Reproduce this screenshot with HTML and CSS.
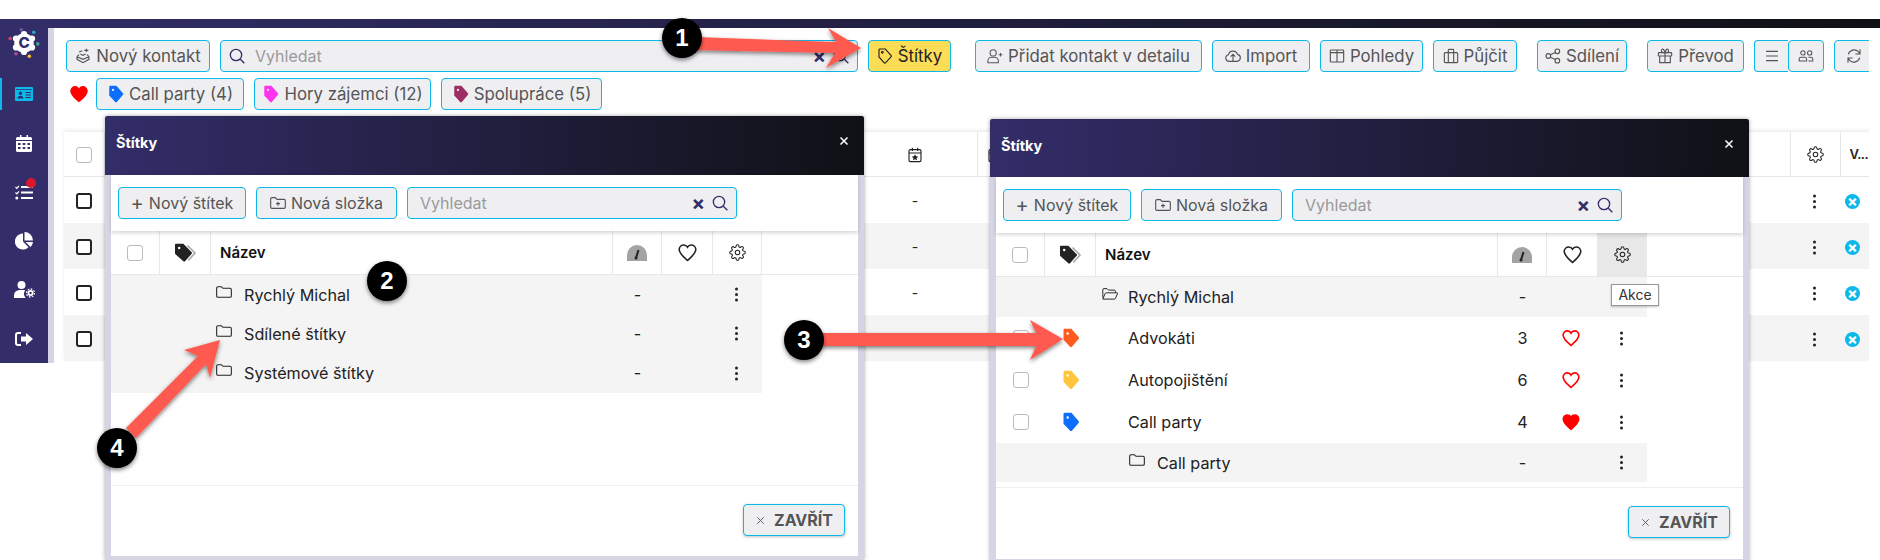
FILE: index.html
```html
<!DOCTYPE html>
<html lang="cs">
<head>
    <meta charset="UTF-8">
    <meta name="viewport" content="width=device-width, initial-scale=1.0">
    <title>Štítky</title>
    <link rel="stylesheet" href="styles.css">
</head>
<body>
    <!-- icon set, used through <use> below -->
    <svg class="icon-defs" xmlns="http://www.w3.org/2000/svg">
        <symbol id="i-search" viewBox="0 0 24 24"><circle cx="10.5" cy="10.5" r="8.5"/><path d="M17 17l6 6"/></symbol>
        <symbol id="i-tag" viewBox="0 0 24 24"><path d="M4 1.5h8.5l8.8 9.8a1.2 1.2 0 0 1 0 1.6l-8.6 9.4a1.2 1.2 0 0 1-1.8 0L3 13.5V2.5a1 1 0 0 1 1-1z"/><circle cx="8" cy="6.5" r="1.3"/></symbol>
        <symbol id="i-tag-fill" viewBox="0 0 24 24"><path fill-rule="evenodd" d="M4.5 1h8l8.8 10a1.5 1.5 0 0 1 0 2l-8.2 9.6a1.5 1.5 0 0 1-2.2 0L3 14V2.5A1.5 1.5 0 0 1 4.5 1zM8 5a1.5 1.5 0 1 0 0 3 1.5 1.5 0 0 0 0-3z"/></symbol>
        <symbol id="i-heart" viewBox="0 0 24 24"><path d="M12 22C8 18.5 1.5 13.5 1.5 8A5.8 5.8 0 0 1 7.3 2.5c2 0 3.7 1 4.7 2.8 1-1.8 2.7-2.8 4.7-2.8A5.8 5.8 0 0 1 22.5 8c0 5.5-6.5 10.5-10.5 14z"/></symbol>
        <symbol id="i-gear" viewBox="0 0 24 24"><circle cx="12" cy="12" r="3.2"/><path d="M19.4 15a1.65 1.65 0 0 0 .33 1.82l.06.06a2 2 0 0 1 0 2.83 2 2 0 0 1-2.83 0l-.06-.06a1.65 1.65 0 0 0-1.82-.33 1.65 1.65 0 0 0-1 1.51V21a2 2 0 0 1-2 2 2 2 0 0 1-2-2v-.09A1.65 1.65 0 0 0 9 19.4a1.65 1.65 0 0 0-1.82.33l-.06.06a2 2 0 0 1-2.83 0 2 2 0 0 1 0-2.83l.06-.06a1.65 1.65 0 0 0 .33-1.82 1.65 1.65 0 0 0-1.51-1H3a2 2 0 0 1-2-2 2 2 0 0 1 2-2h.09A1.65 1.65 0 0 0 4.6 9a1.65 1.65 0 0 0-.33-1.82l-.06-.06a2 2 0 0 1 0-2.83 2 2 0 0 1 2.83 0l.06.06a1.65 1.65 0 0 0 1.82.33H9a1.65 1.65 0 0 0 1-1.51V3a2 2 0 0 1 2-2 2 2 0 0 1 2 2v.09a1.65 1.65 0 0 0 1 1.51 1.65 1.65 0 0 0 1.82-.33l.06-.06a2 2 0 0 1 2.83 0 2 2 0 0 1 0 2.83l-.06.06a1.65 1.65 0 0 0-.33 1.82V9a1.65 1.65 0 0 0 1.51 1H21a2 2 0 0 1 2 2 2 2 0 0 1-2 2h-.09a1.65 1.65 0 0 0-1.51 1z"/></symbol>
        <symbol id="i-folder" viewBox="0 0 24 18"><path d="M1 3A2 2 0 0 1 3 1h5l2.5 2.5H21a2 2 0 0 1 2 2V15a2 2 0 0 1-2 2H3a2 2 0 0 1-2-2z"/></symbol>
        <symbol id="i-folder-open" viewBox="0 0 28 20"><path d="M2 16V3a2 2 0 0 1 2-2h5l2.5 2.5H21a2 2 0 0 1 2 2V8M2 18.5L6 9a1.5 1.5 0 0 1 1.4-1H25.5a1 1 0 0 1 1 1.4L23 17.5a1.5 1.5 0 0 1-1.4 1z"/></symbol>
        <symbol id="i-folder-plus" viewBox="0 0 24 20"><path d="M1 4A2 2 0 0 1 3 2h5l2.5 2.5H21a2 2 0 0 1 2 2V16a2 2 0 0 1-2 2H3a2 2 0 0 1-2-2zM12 8v6M9 11h6"/></symbol>
        <symbol id="i-box" viewBox="0 0 24 24"><path d="M3 13l9 4 9-4M3 13l3-3M21 13l-3-3M3 13v4l9 5 9-5v-4M8 9l4 2 4-2M14 3.5h6M17 1v5M6 6l5-2"/></symbol>
        <symbol id="i-user-plus" viewBox="0 0 26 24"><circle cx="10" cy="7" r="5"/><path d="M1.5 23v-3a6 6 0 0 1 6-6h5a6 6 0 0 1 6 6v3zM22 7v6M19 10h6"/></symbol>
        <symbol id="i-cloud" viewBox="0 0 24 24"><path d="M6 20a5 5 0 0 1-.8-9.9A7 7 0 0 1 18.7 9.5 5.3 5.3 0 0 1 18 20zM12 19v-9M8.5 13l3.5-3.5 3.5 3.5"/></symbol>
        <symbol id="i-columns" viewBox="0 0 24 24"><rect x="2" y="3" width="20" height="18" rx="1"/><path d="M12 3v18M2 7h20"/></symbol>
        <symbol id="i-case" viewBox="0 0 24 24"><rect x="2" y="7" width="20" height="15" rx="1.5"/><path d="M8 7V3a1 1 0 0 1 1-1h6a1 1 0 0 1 1 1v4M8 7v15M16 7v15"/></symbol>
        <symbol id="i-share" viewBox="0 0 24 24"><circle cx="18.5" cy="5" r="3.5"/><circle cx="5" cy="12" r="3.5"/><circle cx="18.5" cy="19" r="3.5"/><path d="M8.1 10.3l7.3-3.7M8.1 13.7l7.3 3.7"/></symbol>
        <symbol id="i-gift" viewBox="0 0 24 24"><rect x="2" y="7" width="20" height="5" rx="1"/><path d="M4 12v10h16V12M12 7v15M12 7C9 7 6.5 6 6.5 4S9 1 10 2.5 12 7 12 7zM12 7c3 0 5.5-1 5.5-3S15 1 14 2.5 12 7 12 7z"/></symbol>
        <symbol id="i-menu" viewBox="0 0 24 24"><path d="M3 5h18M3 12h18M3 19h18"/></symbol>
        <symbol id="i-users" viewBox="0 0 26 24"><circle cx="8" cy="7" r="3.5"/><circle cx="19" cy="7" r="3.5"/><path d="M2 20v-3a3 3 0 0 1 3-3h6a3 3 0 0 1 3 3v3zM17 14h4a3 3 0 0 1 3 3v3h-7"/></symbol>
        <symbol id="i-refresh" viewBox="0 0 24 24"><path d="M21 2v7h-7M3 22v-7h7M3.5 9.5A9 9 0 0 1 18.5 5.5L21 9M20.5 14.5A9 9 0 0 1 5.5 18.5L3 15"/></symbol>
        <symbol id="i-close" viewBox="0 0 24 24"><path d="M5 5l14 14M19 5L5 19"/></symbol>
        <symbol id="i-calendar-star" viewBox="0 0 24 24"><rect x="3" y="4" width="18" height="18" rx="2"/><path d="M3 9h18M8 1v5M16 1v5"/><path class="icon-solid" d="M12 11l1.5 3 3.3.4-2.4 2.3.6 3.3-3-1.6-3 1.6.6-3.3-2.4-2.3 3.3-.4z"/></symbol>
    </svg>

    <div class="topbar"></div>
    <div class="page">
        <nav class="sidebar">
            <div class="logo">
                <svg width="32" height="32" viewBox="0 0 36 36">
                    <g fill="#fff">
                        <circle cx="18" cy="18" r="11"/><circle cx="18" cy="8" r="3.5"/><circle cx="27" cy="13" r="3.5"/>
                        <circle cx="27" cy="23" r="3.5"/><circle cx="18" cy="28" r="3.5"/><circle cx="9" cy="23" r="3.5"/><circle cx="9" cy="13" r="3.5"/>
                    </g>
                    <circle cx="15" cy="3" r="2" fill="#6a5a9c"/><circle cx="29" cy="6" r="2" fill="#2aa6c9"/><circle cx="33.5" cy="19" r="2" fill="#3aa98a"/>
                    <circle cx="24" cy="33" r="2" fill="#f4c430"/><circle cx="9" cy="30" r="2" fill="#b84a8e"/><circle cx="2.5" cy="13" r="2" fill="#d8455a"/>
                    <text class="logo-letter" x="18" y="24" text-anchor="middle">C</text>
                </svg>
            </div>
            <a class="nav-item active">
                <svg width="18" height="14" viewBox="0 0 18 14"><path fill="#0bb8ea" fill-rule="evenodd" d="M1 0h16a1 1 0 0 1 1 1v12a1 1 0 0 1-1 1H1a1 1 0 0 1-1-1V1a1 1 0 0 1 1-1zm0 2v.8h16V2zm4.5 2.5a1.7 1.7 0 1 0 0 3.4 1.7 1.7 0 0 0 0-3.4zM2.5 11.5h6c0-1.6-1.3-2.8-3-2.8s-3 1.2-3 2.8zM10.5 5v1H16V5zm0 2.500v1H16v-1zm0 2.500v1H16v-1z"/></svg>
            </a>
            <a class="nav-item">
                <svg width="16" height="17" viewBox="0 0 16 17"><path fill="#fff" fill-rule="evenodd" d="M4 0h1.5v2h5V0H12v2h2.5A1.5 1.5 0 0 1 16 3.5V5H0V3.5A1.5 1.5 0 0 1 1.5 2H4zM0 6h16v9.5a1.5 1.5 0 0 1-1.5 1.5h-13A1.5 1.5 0 0 1 0 15.5zm2 2v2h2.5V8zm4.7 0v2h2.6V8zm4.8 0v2H14V8zM2 12v2h2.5v-2zm4.7 0v2h2.600v-2zm4.800 0v2H14v-2z"/></svg>
            </a>
            <a class="nav-item">
                <svg width="18" height="15" viewBox="0 0 18 15"><g fill="#fff"><rect x="6" y="1" width="12" height="2"/><rect x="6" y="6.5" width="12" height="2"/><rect x="6" y="12" width="12" height="2"/><circle cx="1.8" cy="13" r="1.5"/></g><path d="M.5 2l1.3 1.3L4 .8M.5 7.5l1.3 1.3L4 6.3" fill="none" stroke="#fff" stroke-width="1.2"/></svg>
                <span class="nav-badge"></span>
            </a>
            <a class="nav-item">
                <svg width="18" height="18" viewBox="0 0 18 18"><path fill="#fff" d="M8 1.5v8l5.500 5.700A8 8 0 1 1 8 1.500zM9.500 0A8.500 8.500 0 0 1 18 8.500h-8.500zM10.500 10H18a8.300 8.300 0 0 1-2.500 5z"/></svg>
            </a>
            <a class="nav-item">
                <svg width="21" height="17" viewBox="0 0 21 17"><g fill="#fff"><circle cx="7.5" cy="4" r="4"/><path d="M0 17v-2.500A5.500 5.500 0 0 1 5.500 9h4c.6 0 1.200.1 1.700.3a5.500 5.500 0 0 0 .6 7.700z"/></g><circle cx="16.5" cy="12" r="3" fill="#fff"/><circle cx="16.5" cy="12" r="1.2" fill="#332d69"/><circle cx="16.5" cy="12" r="4" fill="none" stroke="#fff" stroke-width="1.3" stroke-dasharray="1.6 1.5"/></svg>
            </a>
            <a class="nav-item">
                <svg width="18" height="14" viewBox="0 0 18 14"><path fill="none" stroke="#fff" stroke-width="2" d="M6 1H3a2 2 0 0 0-2 2v8a2 2 0 0 0 2 2h3"/><path fill="#fff" d="M11 1l7 6-7 6V9.5H6v-5h5z"/></svg>
            </a>
        </nav>

        <main class="content">
            <div class="toolbar">
                <button class="btn w-new"><svg class="icon"><use href="#i-box"/></svg>Nový kontakt</button>
                <div class="search w-main-search">
                    <svg class="icon search-icon"><use href="#i-search"/></svg>
                    <span class="search-text">Vyhledat</span>
                    <span class="search-clear">×</span>
                    <svg class="icon search-icon"><use href="#i-search"/></svg>
                </div>
                <button class="btn btn-yellow w-labels"><svg class="icon"><use href="#i-tag"/></svg>Štítky</button>
                <button class="btn w-add after-wide"><svg class="icon"><use href="#i-user-plus"/></svg>Přidat kontakt v detailu</button>
                <button class="btn w-import"><svg class="icon"><use href="#i-cloud"/></svg>Import</button>
                <button class="btn w-views"><svg class="icon"><use href="#i-columns"/></svg>Pohledy</button>
                <button class="btn w-lend"><svg class="icon"><use href="#i-case"/></svg>Půjčit</button>
                <button class="btn w-share after-mid"><svg class="icon"><use href="#i-share"/></svg>Sdílení</button>
                <button class="btn w-transfer after-mid"><svg class="icon"><use href="#i-gift"/></svg>Převod</button>
                <div class="btn-pair">
                    <button class="btn w-menu"><svg class="icon"><use href="#i-menu"/></svg></button>
                    <button class="btn w-people"><svg class="icon"><use href="#i-users"/></svg></button>
                </div>
                <button class="btn w-refresh"><svg class="icon"><use href="#i-refresh"/></svg></button>
            </div>

            <div class="favourites">
                <svg class="fav-heart"><use href="#i-heart"/></svg>
                <button class="btn w-fav1"><svg class="icon fav-tag tag-blue"><use href="#i-tag-fill"/></svg>Call party (4)</button>
                <button class="btn w-fav2"><svg class="icon fav-tag tag-pink"><use href="#i-tag-fill"/></svg>Hory zájemci (12)</button>
                <button class="btn w-fav3"><svg class="icon fav-tag tag-plum"><use href="#i-tag-fill"/></svg>Spolupráce (5)</button>
            </div>

            <table class="contacts">
                <colgroup>
                    <col class="c-check"><col class="c-fill1"><col class="c-date"><col class="c-fill2"><col class="c-gear"><col class="c-vis">
                </colgroup>
                <thead>
                    <tr>
                        <th><span class="check check-soft"></span></th>
                        <th></th>
                        <th><svg class="icon icon-dark"><use href="#i-calendar-star"/></svg></th>
                        <th class="cell-left"><svg class="icon icon-dark"><use href="#i-calendar-star"/></svg></th>
                        <th><svg class="icon icon-dark icon-gear"><use href="#i-gear"/></svg></th>
                        <th class="cell-left cell-vis">V...</th>
                    </tr>
                </thead>
                <tbody>
                    <tr>
                        <td><span class="check"></span></td><td></td><td>-</td><td></td>
                        <td><span class="kebab"></span></td><td class="cell-left cell-state"><span class="x-circle">×</span></td>
                    </tr>
                    <tr>
                        <td><span class="check"></span></td><td></td><td>-</td><td></td>
                        <td><span class="kebab"></span></td><td class="cell-left cell-state"><span class="x-circle">×</span></td>
                    </tr>
                    <tr>
                        <td><span class="check"></span></td><td></td><td>-</td><td></td>
                        <td><span class="kebab"></span></td><td class="cell-left cell-state"><span class="x-circle">×</span></td>
                    </tr>
                    <tr>
                        <td><span class="check"></span></td><td></td><td>-</td><td></td>
                        <td><span class="kebab"></span></td><td class="cell-left cell-state"><span class="x-circle">×</span></td>
                    </tr>
                </tbody>
            </table>
        </main>
    </div>

    <!-- left dialog: root folders -->
    <section class="modal modal-left">
        <header class="modal-head">
            <h2>Štítky</h2>
            <svg class="modal-x"><use href="#i-close"/></svg>
        </header>
        <div class="modal-body">
            <div class="modal-tools">
                <button class="btn w-newtag"><span class="plus">+</span>Nový štítek</button>
                <button class="btn w-newdir"><svg class="icon"><use href="#i-folder-plus"/></svg>Nová složka</button>
                <div class="search w-modal-search">
                    <span class="search-text">Vyhledat</span>
                    <span class="search-clear">×</span>
                    <svg class="icon search-icon"><use href="#i-search"/></svg>
                </div>
            </div>
            <div class="tag-list">
                <div class="tag-row tag-head">
                    <span class="col"><span class="check check-soft"></span></span>
                    <span class="col"><svg class="tags-icon" viewBox="0 0 28 24"><path fill="none" stroke="#aaa" stroke-width="2" d="M17 3l9 9-8 9"/><path fill="#222" d="M3 1h9l10 10a1.5 1.5 0 0 1 0 2l-8 9a1.5 1.5 0 0 1-2 0L2 13V2a1 1 0 0 1 1-1z"/><circle cx="7" cy="6" r="1.5" fill="#fff"/></svg></span>
                    <span class="col col-name">Název</span>
                    <span class="col"><svg class="gauge" viewBox="0 0 20 16"><path fill="#a3a3a3" d="M0 16v-6a10 10 0 0 1 20 0v6z"/><path stroke="#222" stroke-width="2" d="M11.5 5L9 13"/><circle cx="9" cy="13" r="1.5" fill="#222"/></svg></span>
                    <span class="col"><svg class="icon icon-dark icon-heart"><use href="#i-heart"/></svg></span>
                    <span class="col"><svg class="icon icon-dark icon-gear"><use href="#i-gear"/></svg></span>
                </div>
                <div class="tag-row row-grey row-short">
                    <span></span><span></span>
                    <span class="col-name dir-name"><svg class="dir"><use href="#i-folder"/></svg>Rychlý Michal</span>
                    <span class="col">-</span><span></span><span class="col"><span class="kebab"></span></span>
                </div>
                <div class="tag-row row-grey row-short">
                    <span></span><span></span>
                    <span class="col-name dir-name"><svg class="dir"><use href="#i-folder"/></svg>Sdílené štítky</span>
                    <span class="col">-</span><span></span><span class="col"><span class="kebab"></span></span>
                </div>
                <div class="tag-row row-grey row-short">
                    <span></span><span></span>
                    <span class="col-name dir-name"><svg class="dir"><use href="#i-folder"/></svg>Systémové štítky</span>
                    <span class="col">-</span><span></span><span class="col"><span class="kebab"></span></span>
                </div>
            </div>
            <footer class="modal-foot">
                <button class="btn btn-close"><svg class="icon"><use href="#i-close"/></svg>ZAVŘÍT</button>
            </footer>
        </div>
    </section>

    <!-- right dialog: opened folder -->
    <section class="modal modal-right">
        <header class="modal-head">
            <h2>Štítky</h2>
            <svg class="modal-x"><use href="#i-close"/></svg>
        </header>
        <div class="modal-body">
            <div class="modal-tools">
                <button class="btn w-newtag"><span class="plus">+</span>Nový štítek</button>
                <button class="btn w-newdir"><svg class="icon"><use href="#i-folder-plus"/></svg>Nová složka</button>
                <div class="search w-modal-search">
                    <span class="search-text">Vyhledat</span>
                    <span class="search-clear">×</span>
                    <svg class="icon search-icon"><use href="#i-search"/></svg>
                </div>
            </div>
            <div class="tag-list">
                <div class="tag-row tag-head">
                    <span class="col"><span class="check check-soft"></span></span>
                    <span class="col"><svg class="tags-icon" viewBox="0 0 28 24"><path fill="none" stroke="#aaa" stroke-width="2" d="M17 3l9 9-8 9"/><path fill="#222" d="M3 1h9l10 10a1.5 1.5 0 0 1 0 2l-8 9a1.5 1.5 0 0 1-2 0L2 13V2a1 1 0 0 1 1-1z"/><circle cx="7" cy="6" r="1.5" fill="#fff"/></svg></span>
                    <span class="col col-name">Název</span>
                    <span class="col"><svg class="gauge" viewBox="0 0 20 16"><path fill="#a3a3a3" d="M0 16v-6a10 10 0 0 1 20 0v6z"/><path stroke="#222" stroke-width="2" d="M11.5 5L9 13"/><circle cx="9" cy="13" r="1.5" fill="#222"/></svg></span>
                    <span class="col"><svg class="icon icon-dark icon-heart"><use href="#i-heart"/></svg></span>
                    <span class="col col-hover"><svg class="icon icon-dark icon-gear"><use href="#i-gear"/></svg></span>
                </div>
                <div class="tag-row row-grey row-first">
                    <span></span><span></span>
                    <span class="col-name dir-name"><svg class="dir dir-open"><use href="#i-folder-open"/></svg>Rychlý Michal</span>
                    <span class="col">-</span><span></span><span></span>
                </div>
                <div class="tag-row">
                    <span class="col"><span class="check check-soft"></span></span>
                    <span class="col"><svg class="small-tag tag-orange"><use href="#i-tag-fill"/></svg></span>
                    <span class="col-name tag-name">Advokáti</span>
                    <span class="col">3</span>
                    <span class="col"><svg class="icon heart-line"><use href="#i-heart"/></svg></span>
                    <span class="col"><span class="kebab"></span></span>
                </div>
                <div class="tag-row">
                    <span class="col"><span class="check check-soft"></span></span>
                    <span class="col"><svg class="small-tag tag-amber"><use href="#i-tag-fill"/></svg></span>
                    <span class="col-name tag-name">Autopojištění</span>
                    <span class="col">6</span>
                    <span class="col"><svg class="icon heart-line"><use href="#i-heart"/></svg></span>
                    <span class="col"><span class="kebab"></span></span>
                </div>
                <div class="tag-row">
                    <span class="col"><span class="check check-soft"></span></span>
                    <span class="col"><svg class="small-tag tag-blue"><use href="#i-tag-fill"/></svg></span>
                    <span class="col-name tag-name">Call party</span>
                    <span class="col">4</span>
                    <span class="col"><svg class="icon heart-full"><use href="#i-heart"/></svg></span>
                    <span class="col"><span class="kebab"></span></span>
                </div>
                <div class="tag-row row-grey row-sub">
                    <span></span><span></span>
                    <span class="col-name dir-name sub-dir"><svg class="dir"><use href="#i-folder"/></svg>Call party</span>
                    <span class="col">-</span><span></span><span class="col"><span class="kebab"></span></span>
                </div>
            </div>
            <footer class="modal-foot">
                <button class="btn btn-close"><svg class="icon"><use href="#i-close"/></svg>ZAVŘÍT</button>
            </footer>
        </div>
        <div class="tooltip">Akce</div>
    </section>

    <!-- numbered callouts drawn over the screenshot -->
    <svg class="notes" width="1880" height="560" viewBox="0 0 1880 560">
        <defs>
            <filter id="drop" x="-20%" y="-40%" width="140%" height="180%"><feDropShadow dx="0" dy="2" stdDeviation="2" flood-color="#000" flood-opacity=".5"/></filter>
        </defs>
        <g filter="url(#drop)" fill="#ff5a4f">
            <path d="M695 37L836 42 828 28 861 48 826 68 835 53 695 50z"/>
            <path d="M820 333H1036L1030 320 1063 339 1030 360 1036 346H820z"/>
            <path d="M126 428L198 356 184 350 220 340 210 378 206 364 136 438z"/>
        </g>
        <g filter="url(#drop)" fill="#000">
            <circle cx="682" cy="38" r="20"/>
            <circle cx="387" cy="281" r="20"/>
            <circle cx="804" cy="340" r="20"/>
            <circle cx="117" cy="448" r="20"/>
        </g>
        <g class="note-num" text-anchor="middle">
            <text x="682" y="46">1</text>
            <text x="387" y="289">2</text>
            <text x="804" y="348">3</text>
            <text x="117" y="456">4</text>
        </g>
    </svg>
</body>
</html>
```

FILE: styles.css
```css
html, body {
    margin: 0;
    height: 560px;
    overflow: hidden;
    background: #fff;
}
body {
    position: relative;
    padding-top: 19px;
    box-sizing: border-box;
    font-family: Inter, "Noto Sans", sans-serif;
    font-size: 14px;
    color: #222;
}
.icon-defs {
    position: absolute;
    width: 0;
    height: 0;
}
.topbar {
    height: 9px;
    background: linear-gradient(90deg, #332d69, #0f1115);
}
.page {
    display: flex;
    height: 335px;
}

/* sidebar */
.sidebar {
    width: 48px;
    flex: none;
    border-right: 6px solid #d6d5e3;
    background: #332d69;
    display: flex;
    flex-direction: column;
    align-items: center;
}
.logo {
    height: 42px;
    display: flex;
    align-items: center;
    justify-content: center;
}
.logo svg {
    margin-top: -12px;
}
.logo-letter {
    font: 800 17px Inter, sans-serif;
    fill: #332d69;
}
.nav-item {
    position: relative;
    width: 100%;
    height: 49px;
    display: flex;
    align-items: center;
    justify-content: center;
}
.nav-item.active::before {
    content: "";
    position: absolute;
    left: 0;
    top: 8px;
    width: 2px;
    height: 32px;
    background: #0bb8ea;
}
.nav-badge {
    position: absolute;
    left: 26px;
    top: 10px;
    width: 10px;
    height: 10px;
    border-radius: 50%;
    background: #d8192c;
}

/* main */
.content {
    flex: 1;
    min-width: 0;
    max-width: 1815px;
    padding: 12px 0 0 10px;
    overflow: hidden;
    box-sizing: border-box;
}
.toolbar {
    display: flex;
    gap: 10px;
    margin-left: 2px;
    width: 1830px;
}
.btn {
    display: flex;
    align-items: center;
    justify-content: center;
    gap: 5px;
    height: 32px;
    box-sizing: border-box;
    padding: 0;
    flex: none;
    background: #efeff2;
    border: 1px solid #0bb8ea;
    border-radius: 4px;
    font: 400 16.8px Inter, "Noto Sans", sans-serif;
    color: #555;
    white-space: nowrap;
}
.btn-yellow {
    background: #fddc56;
    color: #222;
}
.icon {
    width: 16px;
    height: 16px;
    flex: none;
    fill: none;
    stroke: currentColor;
    stroke-width: 1.7;
}
.icon-dark {
    color: #222;
}
.icon-solid {
    fill: currentColor;
    stroke: none;
}
.icon-gear {
    width: 17px;
    height: 17px;
    stroke-width: 1.5;
}
.icon-heart {
    width: 19px;
    height: 19px;
    stroke-width: 2;
}
.w-new { width: 144px; }
.w-labels { width: 83px; }
.w-add { width: 227px; }
.w-import { width: 98px; }
.w-views { width: 103px; }
.w-lend { width: 84px; }
.w-share { width: 90px; }
.w-transfer { width: 97px; }
.w-menu { width: 34px; border-right: 0; border-radius: 4px 0 0 4px; }
.w-people { width: 36px; }
.w-refresh { width: 40px; }
.w-fav1 { width: 148px; }
.w-fav2 { width: 177px; }
.w-fav3 { width: 161px; }
.w-newtag { width: 128px; }
.w-newdir { width: 141px; }
.w-main-search { width: 638px; }
.w-modal-search { width: 330px; }
.modal-tools .btn {
    font-size: 16px;
}
.after-wide { margin-left: 14px; }
.after-mid { margin-left: 10px; }
.btn-pair {
    display: flex;
}
.search {
    height: 32px;
    box-sizing: border-box;
    display: flex;
    align-items: center;
    flex: none;
    padding: 0 8px;
    background: #efeff2;
    border: 1px solid #0bb8ea;
    border-radius: 4px;
}
.search-text {
    flex: 1;
    padding-left: 4px;
    color: #9a9a9a;
    font-size: 16px;
}
.toolbar .search-text {
    padding-left: 10px;
}
.search-clear {
    font-size: 20px;
    font-weight: 700;
    line-height: 1;
    color: #332d69;
    margin-right: 7px;
}
.search-icon {
    color: #332d69;
    stroke-width: 2;
}
.favourites {
    display: flex;
    align-items: center;
    gap: 10px;
    margin: 6px 0 22px 4px;
}
.fav-heart {
    width: 22px;
    height: 20px;
    fill: #ff0000;
    margin-right: -4px;
}
.fav-tag {
    width: 18px;
    height: 18px;
    margin-right: -1px;
}
.tag-blue { fill: #0d6efd; stroke: none; }
.tag-pink { fill: #ff33ee; stroke: none; }
.tag-plum { fill: #9c2e62; stroke: none; }
.tag-orange { fill: #ff5a1f; }
.tag-amber { fill: #ffc53d; }

/* table behind the dialogs */
.contacts {
    width: 1806px;
    table-layout: fixed;
    border-collapse: collapse;
    box-shadow: 0 -2px 4px rgba(0, 0, 0, .08);
}
.c-check { width: 40px; }
.c-fill1 { width: 749px; }
.c-date { width: 124px; }
.c-fill2 { width: 813px; }
.c-gear { width: 50px; }
.c-vis { width: 30px; }
.contacts th, .contacts td {
    padding: 0;
    text-align: center;
    overflow: hidden;
}
.contacts th {
    height: 44px;
    border-bottom: 1px solid #e6e6e6;
    border-right: 1px solid #e6e6e6;
    font-weight: 600;
}
.contacts td {
    height: 46px;
}
.contacts tbody tr:nth-child(even) {
    background: #f4f4f4;
}
.contacts .cell-left {
    text-align: left;
    padding-left: 9px;
}
.contacts .cell-state {
    padding-left: 5px;
}
.contacts .cell-vis {
    font-size: 13px;
    letter-spacing: -.5px;
}
.contacts svg {
    vertical-align: middle;
}
.check {
    display: inline-block;
    width: 16px;
    height: 16px;
    box-sizing: border-box;
    border: 2px solid #222;
    border-radius: 3px;
    background: #fff;
    vertical-align: middle;
}
.check-soft {
    border: 1px solid #bbb;
}
.kebab {
    display: inline-block;
    width: 3px;
    height: 3px;
    margin-right: 2px;
    border-radius: 50%;
    background: #222;
    box-shadow: 0 -5.5px 0 #222, 0 5.5px 0 #222;
    vertical-align: middle;
}
.x-circle {
    display: inline-block;
    width: 15px;
    height: 15px;
    line-height: 14px;
    border-radius: 50%;
    background: #0bb8ea;
    color: #fff;
    font-size: 15px;
    font-weight: 800;
    text-align: center;
    vertical-align: middle;
}

/* dialogs */
.modal {
    position: absolute;
    width: 759px;
    height: 444px;
    box-shadow: 0 0 4px rgba(0, 0, 0, .35);
    display: flex;
    flex-direction: column;
}
.modal-left {
    left: 105px;
    top: 116px;
}
.modal-right {
    left: 990px;
    top: 119px;
}
.modal-head {
    height: 59px;
    flex: none;
    box-sizing: border-box;
    display: flex;
    align-items: center;
    justify-content: space-between;
    padding: 0 14px 0 11px;
    background: linear-gradient(90deg, #332d69, #0f1115);
    border-radius: 2px 2px 0 0;
    color: #fff;
}
.modal-right .modal-head {
    height: 58px;
}
.modal-head h2 {
    margin: 0 0 6px;
    font-size: 14.5px;
    font-weight: 700;
}
.modal-x {
    width: 12px;
    height: 12px;
    margin-bottom: 9px;
    fill: none;
    stroke: #fff;
    stroke-width: 3;
}
.modal-body {
    flex: 1;
    min-height: 0;
    display: flex;
    flex-direction: column;
    background: #fff;
    border: solid #d6d5e3;
    border-width: 0 6px 4px;
}
.modal-tools {
    display: flex;
    gap: 10px;
    padding: 12px 7px;
    height: 56px;
    flex: none;
    box-sizing: border-box;
    box-shadow: 0 2px 4px rgba(0, 0, 0, .16);
    position: relative;
}
.plus {
    font-size: 20px;
    line-height: 1;
}
.tag-list {
    height: 255px;
    flex: none;
    border-bottom: 1px solid #eee;
    box-sizing: border-box;
}
.tag-row {
    display: grid;
    grid-template-columns: 49px 51px 402px 49px 51px 49px;
    width: 651px;
    height: 42px;
    align-items: center;
    font-size: 16.2px;
}
.row-grey {
    background: #f4f4f4;
}
.row-short {
    height: 39.3px;
}
.row-first {
    height: 40px;
}
.row-sub {
    height: 39px;
}
.tag-head {
    width: 100%;
    height: 44px;
    border-bottom: 1px solid #e8e8e8;
    box-sizing: border-box;
    grid-template-columns: 49px 51px 402px 49px 51px 49px 1fr;
}
.col {
    display: flex;
    align-items: center;
    justify-content: center;
    height: 100%;
}
.tag-head .col {
    border-right: 1px solid #e8e8e8;
    box-sizing: border-box;
}
.tag-head .col-name {
    justify-content: flex-start;
    padding-left: 9px;
    font-size: 15px;
    font-weight: 600;
    color: #111;
}
.col-hover {
    background: #e8e8e8;
}
.tags-icon {
    width: 24px;
    height: 20px;
}
.gauge {
    width: 20px;
    height: 16px;
}
.dir-name {
    display: flex;
    align-items: center;
    gap: 12px;
    padding-left: 5px;
}
.sub-dir {
    padding-left: 33px;
}
.tag-name {
    padding-left: 32px;
}
.dir {
    width: 16px;
    height: 12px;
    margin-top: -6px;
    fill: none;
    stroke: #222;
    stroke-width: 1.6;
}
.dir-open {
    width: 18px;
    margin-right: -3px;
}
.small-tag {
    width: 20px;
    height: 20px;
}
.heart-line {
    width: 18px;
    height: 18px;
    margin-right: 3px;
    color: #ff0000;
    stroke-width: 2.2;
}
.heart-full {
    width: 18px;
    height: 18px;
    margin-right: 3px;
    fill: #ff0000;
    stroke: #ff0000;
}
.modal-foot {
    flex: 1;
    display: flex;
    justify-content: flex-end;
    padding: 18px 13px 0 0;
}
.btn-close {
    width: 102px;
    gap: 8px;
    font-weight: 700;
    font-size: 16px;
    box-shadow: 0 1px 3px rgba(0, 0, 0, .25);
}
.btn-close .icon {
    width: 11px;
    height: 11px;
    stroke-width: 2;
}
.tooltip {
    position: absolute;
    left: 621px;
    top: 165px;
    width: 48px;
    height: 22px;
    box-sizing: border-box;
    border: 1px solid #999;
    background: #fff;
    box-shadow: 0 1px 2px rgba(0, 0, 0, .25);
    font-size: 14px;
    line-height: 20px;
    text-align: center;
    color: #333;
}

/* numbered callouts */
.notes {
    position: absolute;
    left: 0;
    top: 0;
}
.note-num {
    font: 700 24px "Liberation Sans", sans-serif;
    fill: #fff;
}
```
